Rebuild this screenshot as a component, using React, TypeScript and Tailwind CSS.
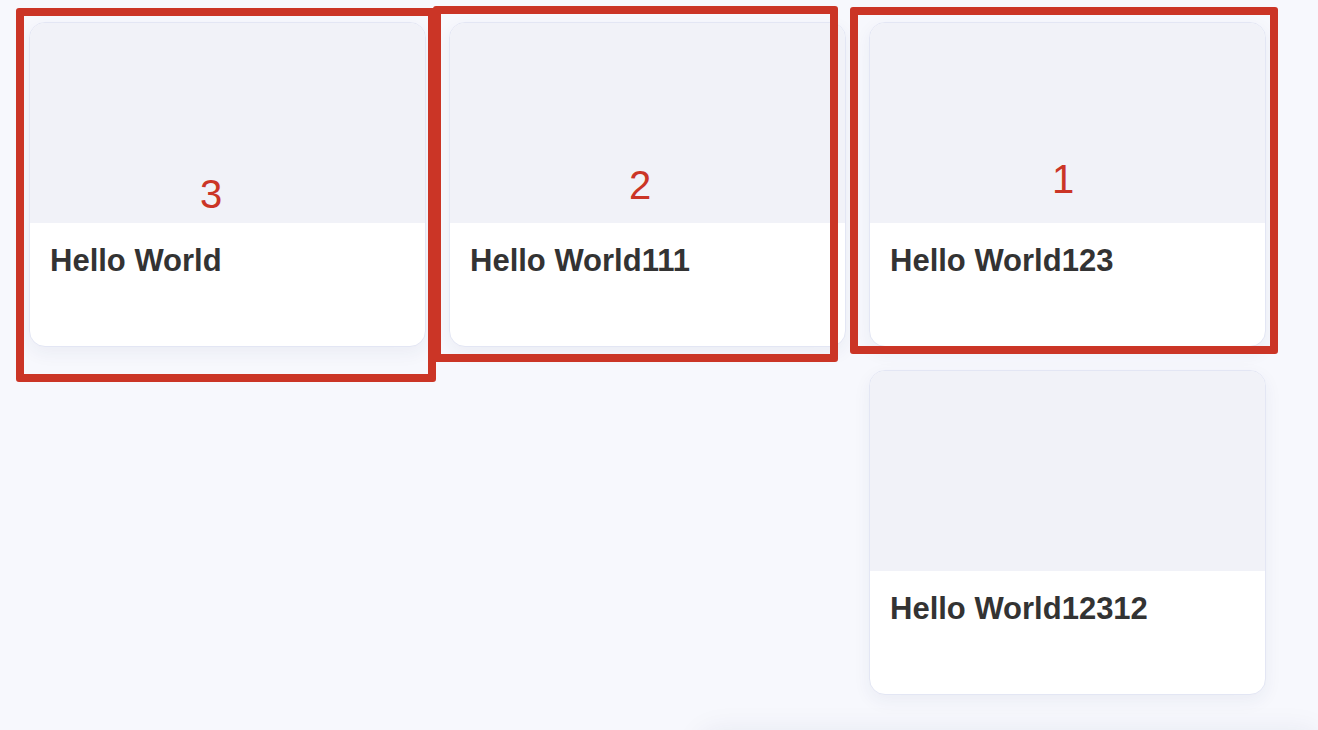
import React from "react";

const cards = [
  { id: 1, title: "Hello World", col: "col-start-1" },
  { id: 2, title: "Hello World111", col: "col-start-2" },
  { id: 3, title: "Hello World123", col: "col-start-3" },
  { id: 4, title: "Hello World12312", col: "col-start-3" },
];

// red annotation boxes drawn over the cards
const marks = [
  { id: 3, box: "left-[16px] top-[8px] w-[420px] h-[374px]", num: "left-[200px] top-[170px]" },
  { id: 2, box: "left-[433px] top-[6px] w-[405px] h-[356px]", num: "left-[629px] top-[161px]" },
  { id: 1, box: "left-[850px] top-[7px] w-[428px] h-[347px]", num: "left-[1052px] top-[155px]" },
];

const Card = ({ title, col }: { title: string; col: string }) => (
  <div
    className={`${col} h-[325px] w-[397px] overflow-hidden rounded-[16px] border border-[#e3e6f4] bg-white shadow-[0_6px_18px_rgba(40,50,110,0.06)]`}
  >
    <div className="h-[200px] bg-[#f1f2f8]" />
    <div className="px-5 pt-[20px]">
      <h3 className="text-[31px] font-bold leading-[36px] text-[#333333]">{title}</h3>
    </div>
  </div>
);

export default function App() {
  return (
    <div
      className="relative h-[730px] w-full overflow-hidden bg-[#f7f8fd]"
      style={{ fontFamily: '"Liberation Sans", Arial, sans-serif' }}
    >
      <div className="grid grid-cols-[397px_397px_397px] gap-[23px] pl-[29px] pt-[22px]">
        {cards.map(({ id, title, col }) => (
          <Card key={id} title={title} col={col} />
        ))}
      </div>

      {marks.map(({ id, box, num }) => (
        <React.Fragment key={id}>
          <div className={`absolute ${box} rounded-[3px] border-[8px] border-[#cb3526]`} />
          <span className={`absolute ${num} text-[40px] leading-[48px] text-[#cb3526]`}>{id}</span>
        </React.Fragment>
      ))}

      <div className="absolute left-[700px] top-[738px] h-[40px] w-[620px] rounded-2xl bg-white shadow-[0_-6px_30px_rgba(30,40,90,0.08)]" />
    </div>
  );
}
